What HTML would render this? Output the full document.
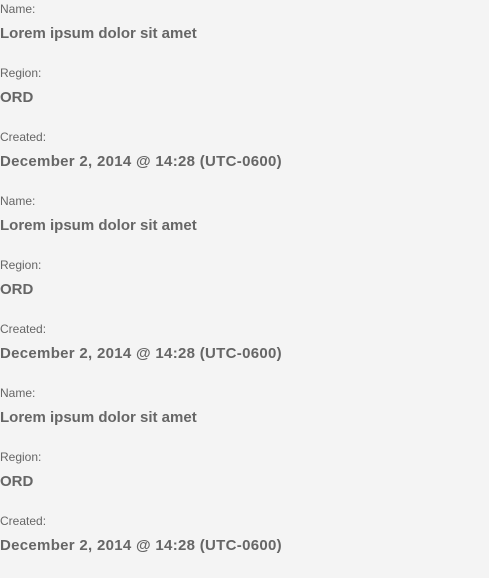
<!DOCTYPE html>
<html><head><style>
html,body{margin:0;padding:0;background:#f4f4f4;width:489px;height:577px;overflow:hidden}
body{font-family:"Liberation Sans",Arial,sans-serif;color:#666;padding-top:1px}
.l{font-size:12px;line-height:16px;height:16px;margin-top:0}
.v{font-size:15px;font-weight:bold;line-height:16px;height:16px;margin-top:8px;margin-bottom:23px;padding-top:1px}
.d{letter-spacing:0.3px}
</style></head><body>
<div class="l">Name:</div><div class="v">Lorem ipsum dolor sit amet</div>
<div class="l">Region:</div><div class="v">ORD</div>
<div class="l">Created:</div><div class="v d">December 2, 2014 @ 14:28 (UTC-0600)</div>
<div class="l">Name:</div><div class="v">Lorem ipsum dolor sit amet</div>
<div class="l">Region:</div><div class="v">ORD</div>
<div class="l">Created:</div><div class="v d">December 2, 2014 @ 14:28 (UTC-0600)</div>
<div class="l">Name:</div><div class="v">Lorem ipsum dolor sit amet</div>
<div class="l">Region:</div><div class="v">ORD</div>
<div class="l">Created:</div><div class="v d">December 2, 2014 @ 14:28 (UTC-0600)</div>
</body></html>
